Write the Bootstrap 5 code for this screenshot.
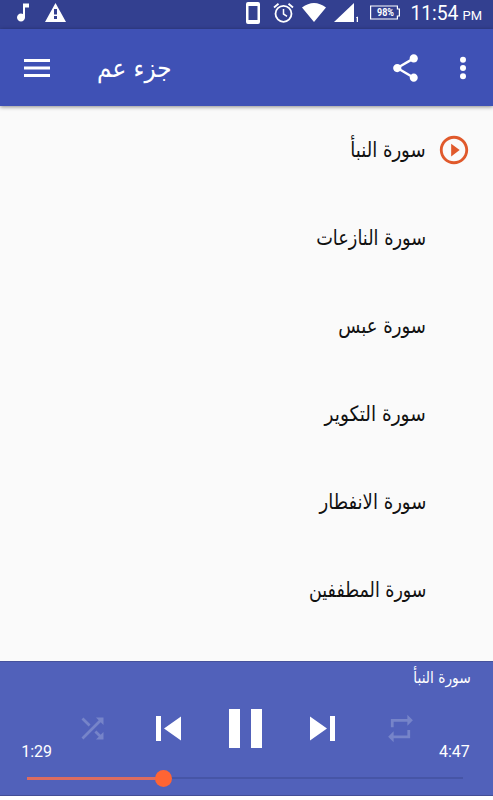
<!DOCTYPE html>
<html lang="ar">
<head>
<meta charset="utf-8">
<meta name="viewport" content="width=device-width, initial-scale=1">
<title>جزء عم</title>
<link href="https://cdn.jsdelivr.net/npm/bootstrap@5.3.0/dist/css/bootstrap.min.css" rel="stylesheet">
<style>
body{font-family:Roboto,"DejaVu Sans",sans-serif;background:#fff;height:800px;overflow:hidden}
svg{display:block;fill:currentColor;flex:none}
.status{height:29px;background:#334090;padding-left:11px;padding-right:11px}
.appbar{height:77px;background:#3f51b5;padding:0 24px;box-shadow:0 1px 4px rgba(0,0,0,.45)}
.title{font-family:"DejaVu Sans",sans-serif;font-size:26px;margin-left:47px;line-height:40px;transform:scaleX(.89);transform-origin:left}
.surahs{height:555px;background:#fafafa;color:#111}
.surah{height:88px;padding-right:22px;font-size:21px}
.surah .label{font-family:"DejaVu Sans",sans-serif;margin-right:11px;line-height:40px;white-space:nowrap;transform:scaleX(.86);transform-origin:right}
.surah:nth-child(2) .label{transform:scaleX(.845)}
.surah:nth-child(4) .label{transform:scaleX(.882)}
.surah:nth-child(6) .label{transform:scaleX(.83)}
.slot{width:34px;height:34px;color:#e0592b}
.player{height:135px;background:#5161ba;border-top:1px solid #46529c;border-bottom:1px solid #434e95}
.now{font-family:"DejaVu Sans",sans-serif;font-size:16px;line-height:32px;height:32px;padding-right:22px}
.now span{display:inline-block;transform:scaleX(.86);transform-origin:right}
.controls{display:grid;grid-template-columns:54px 76px 77px 77px 77px 78px 54px;height:68px;justify-items:center;align-items:center}
.time{font-size:16px;line-height:21px;align-self:end}
.time.elapsed{justify-self:end;margin-right:2px}
.time.total{justify-self:start}
.faded{color:#7684c9}
.seek{height:3px;margin:15px 30px 0 27px;background:linear-gradient(#4655a6,#4655a6) 0 0/100% 2px no-repeat}
.played{height:3px;background:#dc6c60}
.knob{width:17px;height:17px;border-radius:50%;background:#ff6434;margin-left:-9px;flex:none}
.clock{font-size:19.300px;line-height:28px;margin-left:3px}
.pm{font-size:13px;margin-left:4px}
</style>
<script src="https://cdn.jsdelivr.net/npm/bootstrap@5.3.0/dist/js/bootstrap.bundle.min.js"></script>
</head>
<body>
<div class="status d-flex text-white overflow-hidden">
  <svg width="26" height="26" viewBox="0 0 26 26"><path transform="translate(0 .5)" d="M12 3v10.55c-.59-.34-1.27-.55-2-.55-2.21 0-4 1.79-4 4s1.79 4 4 4 4-1.79 4-4V7h4V3h-6z"/></svg>
  <svg class="ms-2" width="24" height="26" viewBox="0 0 24 26"><path d="M0 22h21L10.500 3zM12 19h-3v-3h3zm0-4.500h-3V9h3z" fill-rule="evenodd"/></svg>
  <svg class="ms-auto" width="120" height="29" viewBox="244 0 120 29">
    <path fill-rule="evenodd" d="M249 2h10q2 0 2 2v18q0 2-2 2h-10q-2 0-2-2V4q0-2 2-2zm.5 4v14h9V6z"/>
    <g fill="none" stroke="currentColor"><circle cx="284.500" cy="13.800" r="8" stroke-width="1.800"/><path d="M284.500 9v5l3.500 2.300" stroke-width="1.500"/><path d="M275 7.500l4.500-3.800M294 7.500l-4.500-3.800" stroke-width="1.800"/></g>
    <path d="M303 7.500Q315-1.500 327 7.500L315 22zM355 3v19h-20zM357 17.500l2-1v5.500h-1.300v-4h-.7z"/>
  </svg>
  <svg width="44" height="29" viewBox="364 0 44 29"><path fill="none" stroke="currentColor" stroke-width="1.200" d="M371.600 6h26.800v3h2v7h-2v3h-26.800z"/><text x="378" y="16.200" font-size="10" font-weight="700" textLength="17" lengthAdjust="spacingAndGlyphs" font-family="Roboto">98%</text></svg>
  <div class="clock d-flex align-items-baseline" dir="ltr"><span>11:54</span><span class="pm">PM</span></div>
</div>
<header class="appbar d-flex align-items-center text-white position-relative">
  <svg width="26" height="18" viewBox="0 0 26 18"><path d="M0 0h26v3H0zM0 7.500h26v3H0zM0 15h26v3H0z"/></svg>
  <div class="title" dir="rtl">جزء عم</div>
  <svg class="ms-auto" width="33" height="34" viewBox="0 0 24 24"><path d="M18 16.080c-.76 0-1.440.3-1.960.77L8.910 12.700c.05-.23.09-.46.09-.7s-.04-.47-.09-.7l7.050-4.110c.54.5 1.250.81 2.040.81 1.660 0 3-1.340 3-3s-1.340-3-3-3-3 1.340-3 3c0 .24.04.47.09.7L8.040 9.810C7.500 9.310 6.790 9 6 9c-1.660 0-3 1.340-3 3s1.340 3 3 3c.79 0 1.500-.31 2.040-.81l7.120 4.160c-.05.21-.08.43-.08.65 0 1.610 1.310 2.920 2.920 2.920s2.920-1.310 2.920-2.920-1.310-2.920-2.920-2.920z"/></svg>
  <svg width="8" height="24" viewBox="0 0 8 24" style="margin-left:37px;margin-right:2px"><circle cx="4" cy="3.700" r="3"/><circle cx="4" cy="12" r="3"/><circle cx="4" cy="20.300" r="3"/></svg>
</header>
<main class="surahs overflow-hidden" dir="ltr">
  <div class="surah d-flex align-items-center justify-content-end"><span class="label" dir="rtl">سورة النبأ</span><span class="slot"><svg viewBox="0 0 24 24"><path d="M10 16.500l6-4.500-6-4.500v9zM12 2C6.480 2 2 6.480 2 12s4.480 10 10 10 10-4.480 10-10S17.520 2 12 2zm0 18c-4.410 0-8-3.590-8-8s3.590-8 8-8 8 3.590 8 8-3.590 8-8 8z"/></svg></span></div>
  <div class="surah d-flex align-items-center justify-content-end"><span class="label" dir="rtl">سورة النازعات</span><span class="slot"></span></div>
  <div class="surah d-flex align-items-center justify-content-end"><span class="label" dir="rtl">سورة عبس</span><span class="slot"></span></div>
  <div class="surah d-flex align-items-center justify-content-end"><span class="label" dir="rtl">سورة التكوير</span><span class="slot"></span></div>
  <div class="surah d-flex align-items-center justify-content-end"><span class="label" dir="rtl">سورة الانفطار</span><span class="slot"></span></div>
  <div class="surah d-flex align-items-center justify-content-end"><span class="label" dir="rtl">سورة المطففين</span><span class="slot"></span></div>
</main>
<footer class="player text-white">
  <div class="now" dir="rtl"><span>سورة النبأ</span></div>
  <div class="controls">
    <span class="time elapsed">1:29</span>
    <svg class="faded" width="33" height="33" viewBox="0 0 24 24"><path d="M10.590 9.170L5.410 4 4 5.410l5.170 5.170 1.420-1.410zM14.500 4l2.040 2.040L4 18.590 5.410 20 17.960 7.460 20 9.500V4h-5.500zm.33 9.410l-1.410 1.410 3.130 3.130L14.500 20H20v-5.500l-2.040 2.040-3.130-3.130z"/></svg>
    <svg width="25" height="25" viewBox="0 0 25 25"><path d="M0 0h5v25H0zM25 .5v24L8 12.500z"/></svg>
    <svg width="33" height="39" viewBox="0 0 33 39"><path d="M0 0h11v39H0zM22 0h11v39H22z"/></svg>
    <svg width="25" height="25" viewBox="0 0 25 25"><path d="M20 0h5v25h-5zM0 .5v24l17-12z"/></svg>
    <svg class="faded" width="33" height="33" viewBox="0 0 24 24"><path d="M7 7h10v3l4-4-4-4v3H5v6h2V7zm10 10H7v-3l-4 4 4 4v-3h12v-6h-2v4z"/></svg>
    <span class="time total">4:47</span>
  </div>
  <div class="seek d-flex align-items-center"><div class="played" style="width:137px"></div><div class="knob"></div></div>
</footer>
</body>
</html>
